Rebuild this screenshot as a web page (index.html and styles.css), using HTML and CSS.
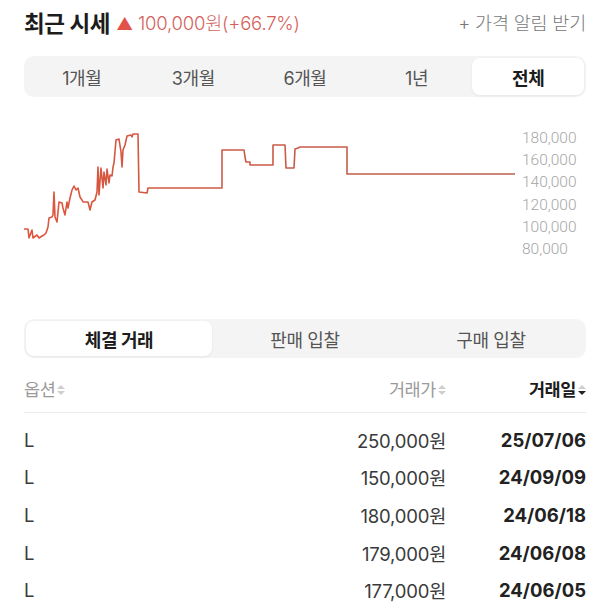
FILE: index.html
```
<!DOCTYPE html>
<html lang="ko">
<head>
    <meta charset="UTF-8">
    <meta name="viewport" content="width=device-width, initial-scale=1.0">
    <title>최근 시세</title>
    <link rel="stylesheet" href="styles.css">
</head>
<body>
    <div class="price-header">
        <div class="title-group">
            <h2 class="title">최근 시세</h2>
            <span class="change"><span class="arrow">▲</span> 100,000원(+66.7%)</span>
        </div>
        <a class="alert-link" href="#">+ 가격 알림 받기</a>
    </div>

    <div class="segment period-tabs">
        <button class="seg-btn">1개월</button>
        <button class="seg-btn">3개월</button>
        <button class="seg-btn">6개월</button>
        <button class="seg-btn">1년</button>
        <button class="seg-btn active">전체</button>
    </div>

    <div class="chart">
        <svg class="chart-line" viewBox="24 110 494 180" width="494" height="180">
            <defs>
                <linearGradient id="lineColor" x1="0" y1="0" x2="1" y2="0">
                    <stop offset="0" stop-color="#e0553c"/>
                    <stop offset="0.3" stop-color="#cf5843"/>
                    <stop offset="1" stop-color="#b9604f"/>
                </linearGradient>
            </defs>
            <polyline fill="none" stroke="url(#lineColor)" stroke-width="1.6" stroke-linejoin="round"
                points="24,229 28,229 29,238 32,230 33,238 37,235 39,238 42,236 44,235 46,233 48,227 49,218 52,217 53,215 54,192 55,217 57,222 59,202 62,203 63,208 65,215 67,202 68,208 70,198 72,190 74,186 76,190 78,188 80,197 82,200 83,202 88,202 90,210 92,202 95,200 97,192 98,167 99,195 101,168 103,188 104,172 106,185 107,169 109,183 110,175 112,176 113,167 114,163 116,140 119,139 121,152 122,167 123,150 125,145 127,136 131,135 132,137 133,134 138,134 139,192 147,193 148,188 222,188 222,150 244,150 245,157 246,162 250,162 250,165 273,165 273,145 285,145 286,168 294,168 295,149 298,148 300,147 347,147 347,174 515,174"/>
        </svg>
        <ul class="axis">
            <li>180,000</li>
            <li>160,000</li>
            <li>140,000</li>
            <li>120,000</li>
            <li>100,000</li>
            <li>80,000</li>
        </ul>
    </div>

    <div class="segment trade-tabs">
        <button class="seg-btn active">체결 거래</button>
        <button class="seg-btn">판매 입찰</button>
        <button class="seg-btn">구매 입찰</button>
    </div>

    <table class="trades">
        <thead>
            <tr>
                <th class="col-option">옵션<span class="sort"><i class="up"></i><i class="down"></i></span></th>
                <th class="col-price">거래가<span class="sort"><i class="up"></i><i class="down"></i></span></th>
                <th class="col-date sorted">거래일<span class="sort"><i class="up"></i><i class="down"></i></span></th>
            </tr>
        </thead>
        <tbody>
            <tr><td class="col-option">L</td><td class="col-price">250,000원</td><td class="col-date">25/07/06</td></tr>
            <tr><td class="col-option">L</td><td class="col-price">150,000원</td><td class="col-date">24/09/09</td></tr>
            <tr><td class="col-option">L</td><td class="col-price">180,000원</td><td class="col-date">24/06/18</td></tr>
            <tr><td class="col-option">L</td><td class="col-price">179,000원</td><td class="col-date">24/06/08</td></tr>
            <tr><td class="col-option">L</td><td class="col-price">177,000원</td><td class="col-date">24/06/05</td></tr>
        </tbody>
    </table>
</body>
</html>
```
FILE: styles.css
```
/* 기본 */
body {
    margin: 0;
    padding: 0 24px;
    font-family: Inter, "Noto Sans CJK KR", sans-serif;
    color: #222;
    background: #fff;
}

/* 상단 제목 */
.price-header {
    display: flex;
    justify-content: space-between;
    align-items: center;
    height: 44px;
}

.title-group {
    display: flex;
    align-items: center;
    gap: 6px;
}

.title {
    margin: 0;
    font-size: 22.5px;
    font-weight: 700;
    color: #1c1c1c;
    letter-spacing: -0.4px;
}

.change {
    font-size: 18.5px;
    font-weight: 300;
    color: #d4625b;
    letter-spacing: -0.2px;
}

.change .arrow {
    color: #e2514a;
    font-size: 17px;
}

.alert-link {
    font-size: 18.5px;
    font-weight: 300;
    color: #777;
    text-decoration: none;
    letter-spacing: -0.2px;
}

/* 세그먼트 탭 */
.segment {
    display: flex;
    background: #f4f4f4;
    border-radius: 10px;
    padding: 2px;
}

.period-tabs {
    margin-top: 12px;
    height: 37px;
}

.trade-tabs {
    margin-top: 29px;
    height: 35px;
}

.seg-btn {
    flex: 1;
    border: 0;
    background: transparent;
    font-family: inherit;
    font-size: 18px;
    font-weight: 400;
    color: #555;
    border-radius: 8px;
    cursor: pointer;
    letter-spacing: -0.4px;
}

.seg-btn.active {
    background: #fff;
    font-weight: 700;
    color: #1c1c1c;
    box-shadow: 0 1px 3px rgba(0, 0, 0, 0.06);
}

/* 차트 */
.chart {
    display: flex;
    height: 180px;
    margin-top: 13px;
}

.chart-line {
    display: block;
}

.axis {
    list-style: none;
    margin: 17px 0 0 4px;
    padding: 0;
    font-family: Roboto, sans-serif;
    font-weight: 300;
    font-size: 15.5px;
    line-height: 22.2px;
    color: #a6a6a6;
}

/* 거래 목록 */
.trades {
    width: 100%;
    border-collapse: collapse;
    margin-top: 10px;
}

.trades th {
    font-weight: 400;
    font-size: 17.5px;
    color: #9a9a9a;
    height: 40px;
    padding: 0 0 4px;
    border-bottom: 1px solid #ececec;
    letter-spacing: -0.4px;
}

.trades th.sorted {
    color: #1c1c1c;
    font-weight: 700;
}

.trades td {
    font-size: 18.5px;
    font-weight: 400;
    height: 37.6px;
    padding: 0;
    color: #3a3a3a;
    letter-spacing: -0.2px;
}

.trades tbody tr:first-child td {
    padding-top: 8px;
}

.col-option {
    text-align: left;
}

.col-price {
    text-align: right;
    width: 180px;
}

.col-date {
    text-align: right;
    width: 140px;
}

.trades td.col-date {
    font-weight: 700;
    color: #222;
    letter-spacing: 0;
}

/* 정렬 아이콘 */
.sort {
    display: inline-flex;
    flex-direction: column;
    gap: 2px;
    margin-left: 2px;
    vertical-align: middle;
    position: relative;
    top: -1px;
}

.sort i {
    display: block;
    width: 0;
    height: 0;
    border-left: 4px solid transparent;
    border-right: 4px solid transparent;
}

.sort .up {
    border-bottom: 4px solid #cfcfcf;
}

.sort .down {
    border-top: 4px solid #cfcfcf;
}

.sorted .sort .up {
    border-bottom-color: #cfcfcf;
}

.sorted .sort .down {
    border-top-color: #222;
}
```
